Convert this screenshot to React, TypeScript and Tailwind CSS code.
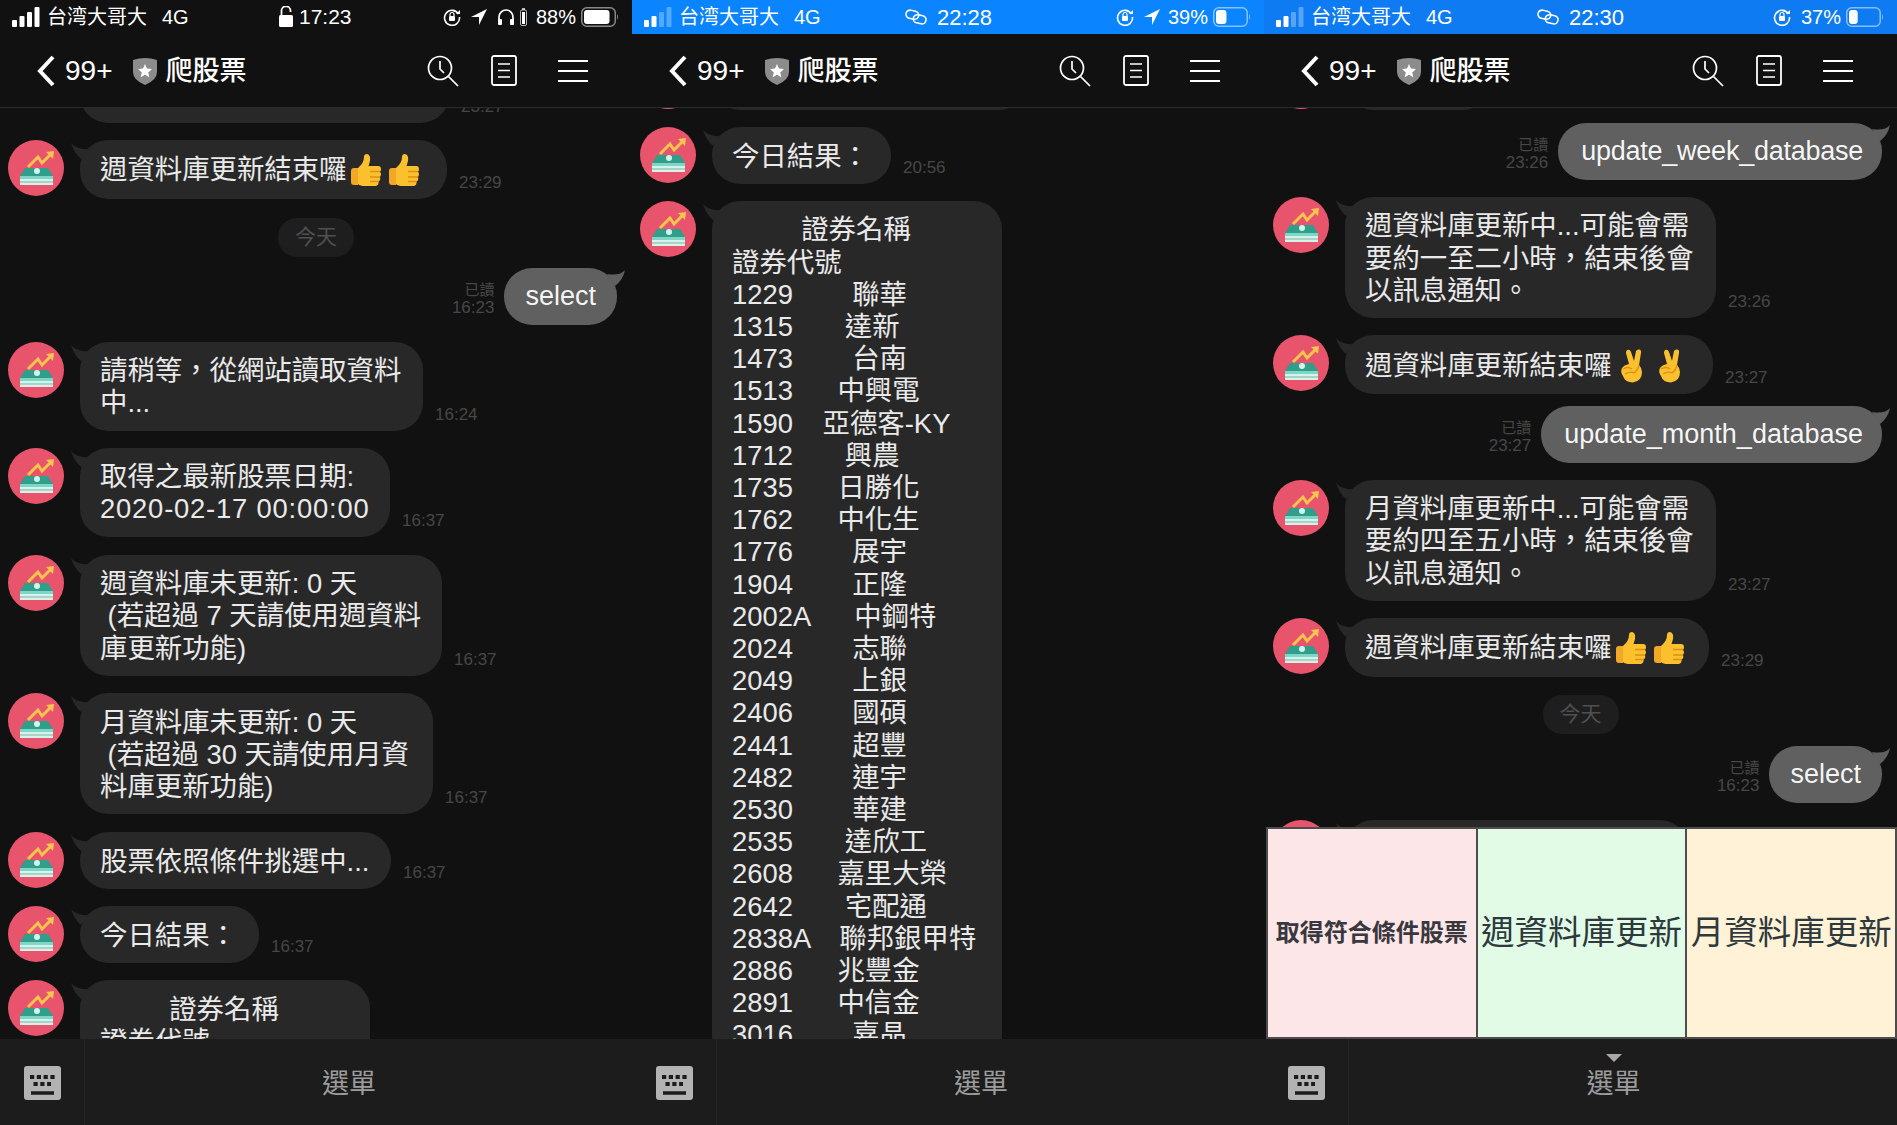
import React from 'react';

const Avatar = () => (
    <svg viewBox="0 0 56 56" className="w-14 h-14 shrink-0">
        <circle cx="28" cy="28" r="28" fill="#e8546b" />
        <path d="M20 27 L30 17 L34 23 L43 14" fill="none" stroke="#f7c44f" strokeWidth="3" />
        <path d="M38 12 L46 11 L45 19 Z" fill="#f7c44f" />
        <path d="M17 28 H40 L45 36 H12 Z" fill="#2f9e8a" />
        <circle cx="29" cy="31" r="3" fill="#d6f3ea" />
        <path d="M12 36 H45 V39 H12 Z" fill="#7fd6c4" />
        <path d="M12 39 H45 V41 H12 Z" fill="#d4f3ec" />
        <path d="M12 41 H45 V42.5 H12 Z" fill="#8fdccb" />
        <path d="M12 42.5 H45 V45 H12 Z" fill="#d4f3ec" />
    </svg>
);

const Thumb = () => (
    <svg viewBox="0 0 32 34" className="w-8 h-[34px] shrink-0">
        <path d="M1 17 Q1 14 4 14 H8 V31 H4 Q1 31 1 28 Z" fill="#f2a825" />
        <path d="M8 14 Q14 9 14 3 Q14 0 17 0 Q21 1 20 7 L18.5 12 H28 Q31 12 31 15 Q31 17 30 18 Q32 20 30 23 Q31 26 28.5 27.5 Q29 31 26 32 H15 Q10 32 8 30 Z" fill="#fbc02d" />
        <path d="M20 17.5 H30 M20 23 H30 M20 27.5 H28.5" stroke="#e08f12" strokeWidth="1.4" fill="none" />
    </svg>
);

const Victory = () => (
    <svg viewBox="0 0 26 34" className="w-[26px] h-[34px] shrink-0">
        <path d="M8 1 Q11 0 12 3 L15 12 L17 2 Q18 0 20.5 0.5 Q22.5 1 22 4 L20 16 Q23 19 23 23 Q23 32 14 33.5 Q6 33.5 4 27 Q1 23 3 19 Q5 16 10 15 L7 4 Q7 2 8 1 Z" fill="#fbc02d" />
        <path d="M4 20 Q9 17 13 20 M6 25 Q11 22 15 24 M15 24 Q19 21 20 16" stroke="#e08f12" strokeWidth="1.3" fill="none" />
    </svg>
);

function Bubble({ className, children }: { className?: string; children?: React.ReactNode }) {
    return (
        <div className={`relative bg-[#282828] rounded-[28px] px-5 pt-[13.5px] pb-[11.2px] text-white/90 whitespace-pre ${className ?? ''}`}>
            <svg viewBox="0 0 18 16" className="absolute left-[-9px] top-[3px] w-[18px] h-4">
                <path d="M0 0 Q6 7 18 6 L10 16 Q3 10 0 0 Z" fill="#282828" />
            </svg>
            {children}
        </div>
    );
}

function In({ time, className, hidden, children, bubble }: { time?: string; className?: string; hidden?: boolean; children?: React.ReactNode; bubble?: string }) {
    return (
        <div className={`flex items-end pl-2 shrink-0 ${className ?? 'mt-[17px]'}`}>
            <div className="self-start mr-4 w-14 h-14 shrink-0">{!hidden && <Avatar />}</div>
            <Bubble className={bubble}>{children}</Bubble>
            {time && <span className="ml-3 pb-[6px] text-[17px] leading-5 text-[#474747]">{time}</span>}
        </div>
    );
}

function Out({ time, className, text, children }: { time: string; className?: string; text?: string; children: React.ReactNode }) {
    return (
        <div className={`flex items-end justify-end shrink-0 ${className ?? 'mt-3 pr-[15px]'}`}>
            <div className="mr-[10px] mb-[8px] flex flex-col items-end text-[#474747] text-[16px] leading-[18px]">
                <span className="text-[15px]">已讀</span>
                <span className="text-[17px]">{time}</span>
            </div>
            <div className={`relative bg-[#606060] rounded-[28px] py-[12.35px] text-[27px] text-white/95 ${text ?? 'px-[21px]'}`}>
                <svg viewBox="0 0 18 16" className="absolute right-[-8px] top-[2px] w-[18px] h-4">
                    <path d="M18 0 Q13 6 0 4 L8 16 Q16 10 18 0 Z" fill="#606060" />
                </svg>
                {children}
            </div>
        </div>
    );
}

const DatePill = ({ className }: { className?: string }) => (
    <div className={`flex justify-center shrink-0 ${className ?? ''}`}>
        <span className="bg-[#1e1e1e] rounded-[19px] w-[76px] h-[39px] flex items-center justify-center text-[21px] text-[#4f4f4f]">今天</span>
    </div>
);

const Signal = ({ dim }: { dim?: boolean }) => (
    <svg viewBox="0 0 28 20" className="w-7 h-5 shrink-0">
        <rect x="0" y="13" width="5" height="7" rx="1" fill="white" />
        <rect x="7.5" y="9" width="5" height="11" rx="1" fill="white" />
        <rect x="15" y="5" width="5" height="15" rx="1" fill="white" fillOpacity={dim ? 0.3 : 1} />
        <rect x="22.5" y="0" width="5" height="20" rx="1" fill="white" fillOpacity={dim ? 0.3 : 1} />
    </svg>
);

const RotLock = () => (
    <svg viewBox="0 0 18 18" className="w-[18px] h-[18px] shrink-0">
        <path d="M15.5 6 A7.5 7.5 0 1 0 16.5 9" fill="none" stroke="white" strokeWidth="1.6" />
        <path d="M13 6 H17 V2 Z" fill="white" />
        <rect x="6" y="8" width="6" height="5" rx="1" fill="white" />
        <path d="M7 8 V6.5 A2 2 0 0 1 11 6.5 V8" fill="none" stroke="white" strokeWidth="1.2" />
    </svg>
);

const Arrow = () => (
    <svg viewBox="0 0 16 16" className="w-4 h-4 shrink-0">
        <path d="M16 0 L0 8 L8 8 L8 16 Z" fill="white" />
    </svg>
);

const Battery = ({ pct }: { pct: number }) => (
    <svg viewBox="0 0 38 20" className="w-[38px] h-5 shrink-0">
        <rect x="0.75" y="0.75" width="33.5" height="18.5" rx="5" fill="none" stroke="white" strokeOpacity="0.5" strokeWidth="1.5" />
        <rect x="3" y="3" width={29 * pct} height="14" rx="3" fill="white" />
        <path d="M36 7 Q38 10 36 13 Z" fill="white" fillOpacity="0.5" />
    </svg>
);

const LinkIcon = () => (
    <svg viewBox="0 0 24 18" className="w-[22px] h-[18px] shrink-0">
        <g fill="none" stroke="white" strokeWidth="1.7">
            <rect x="1" y="2" width="14" height="9" rx="4.5" transform="rotate(12 8 6.5)" />
            <rect x="9" y="7" width="14" height="9" rx="4.5" transform="rotate(12 16 11.5)" />
        </g>
    </svg>
);

function StatusBar({ time, bg, left, dim, right }: { time: React.ReactNode; bg: string; left: string; dim?: boolean; right: React.ReactNode }) {
    return (
        <div className={`h-[34px] flex items-center pl-3 pr-[13px] text-white shrink-0 ${bg}`}>
            <div className={`flex items-center ${left}`}>
                <Signal dim={dim} />
                <span className="ml-[7px] text-[20px]">台湾大哥大</span>
                <span className="ml-[15px] text-[20px]">4G</span>
            </div>
            {time}
            <div className="ml-auto flex items-center">{right}</div>
        </div>
    );
}

function Header() {
    return (
        <div className="h-[74px] flex items-center pl-9 pr-[44px] border-b border-[#2b2b2b] bg-[#111111] text-white shrink-0">
            <svg viewBox="0 0 20 32" className="w-5 h-8 shrink-0">
                <path d="M17 2 L4 16 L17 30" fill="none" stroke="white" strokeWidth="4" />
            </svg>
            <span className="ml-[9px] text-[28px] font-light">99+</span>
            <svg viewBox="0 0 24 28" className="ml-5 w-6 h-7 shrink-0">
                <path d="M0 3 Q12 -1 24 3 V15 Q24 23 12 28 Q0 23 0 15 Z" fill="#8c8c8c" />
                <path d="M12 7 L14 11.6 L19 12.1 L15.2 15.4 L16.3 20.3 L12 17.7 L7.7 20.3 L8.8 15.4 L5 12.1 L10 11.6 Z" fill="white" />
            </svg>
            <span className="ml-[9px] mt-[1px] text-[27px] font-medium">爬股票</span>
            <div className="ml-auto flex items-center">
                <svg viewBox="0 0 32 32" className="w-8 h-8 shrink-0">
                    <g fill="none" stroke="white" strokeWidth="1.7">
                        <circle cx="13" cy="13" r="11.5" />
                        <path d="M13 6 V14 L17 18 M21.5 21.5 L31 31" />
                    </g>
                </svg>
                <svg viewBox="0 0 26 31" className="ml-[32px] w-[26px] h-[31px] shrink-0">
                    <rect x="1" y="1" width="24" height="29" rx="2" fill="none" stroke="white" strokeWidth="1.8" />
                    <path d="M7 9 H19 M7 15.5 H19 M7 22 H19" stroke="white" strokeWidth="1.6" />
                </svg>
                <svg viewBox="0 0 30 24" className="ml-[41px] w-[30px] h-6 shrink-0">
                    <path d="M0 2 H30 M0 12 H30 M0 22 H30" stroke="white" strokeWidth="1.8" />
                </svg>
            </div>
        </div>
    );
}

function BottomBar({ open }: { open?: boolean }) {
    return (
        <div className="h-[86px] flex bg-[#1c1c1c] shrink-0">
            <div className="w-[85px] border-r border-[#262626] flex items-center justify-center shrink-0">
                <svg viewBox="0 0 37 34" className="w-[37px] h-[34px] mt-[1px]">
                    <rect width="37" height="34" rx="3" fill="#b3b3b3" />
                    <path d="M6 11 H31" stroke="#1c1c1c" strokeWidth="4" strokeDasharray="4.2 2.6" />
                    <path d="M9.5 18 H27" stroke="#1c1c1c" strokeWidth="4" strokeDasharray="4.2 2.6" />
                    <path d="M7 27 H30" stroke="#1c1c1c" strokeWidth="3.5" />
                </svg>
            </div>
            <div className="flex-1 flex items-center justify-center text-[27px] text-[#9c9c9c] pr-[19px] pt-1">
                <span className="relative">
                    {open && <span className="absolute -top-[10px] left-1/2 -ml-2 w-0 h-0 border-l-8 border-r-8 border-t-8 border-l-transparent border-r-transparent border-t-[#a8a8a8]" />}
                    選單
                </span>
            </div>
        </div>
    );
}

const stocks = [
    '1229        聯華', '1315       達新', '1473        台南', '1513      中興電', '1590    亞德客-KY',
    '1712       興農', '1735      日勝化', '1762      中化生', '1776        展宇', '1904        正隆',
    '2002A      中鋼特', '2024        志聯', '2049        上銀', '2406        國碩', '2441        超豐',
    '2482        連宇', '2530        華建', '2535       達欣工', '2608      嘉里大榮', '2642       宅配通',
    '2838A    聯邦銀甲特', '2886      兆豐金', '2891      中信金', '3016        嘉晶',
];

function Chat({ children }: { children: React.ReactNode }) {
    return <div className="flex-1 min-h-0 overflow-hidden flex flex-col text-[27.4px] leading-[32.2px] bg-[#111111]">{children}</div>;
}

export default function App() {
    return (
        <div className="w-[1897px] h-[1125px] flex overflow-hidden bg-[#111111] font-['Liberation_Sans','Noto_Sans_CJK_TC',sans-serif]">
            {/* left phone */}
            <div className="w-[632px] h-[1125px] flex flex-col">
                <StatusBar
                    bg="bg-[#111111]"
                    left="w-[267px]"
                    time={
                        <div className="flex items-center">
                            <svg viewBox="0 0 14 22" className="w-[14px] h-[22px]">
                                <rect x="0" y="9" width="14" height="12" rx="1.5" fill="white" />
                                <path d="M2.5 9 V5 A4.5 4.5 0 0 1 11.5 4.5 V6" fill="none" stroke="white" strokeWidth="1.8" />
                            </svg>
                            <span className="ml-[6px] text-[21px]">17:23</span>
                        </div>
                    }
                    right={
                        <>
                            <RotLock />
                            <span className="ml-[10px]"><Arrow /></span>
                            <svg viewBox="0 0 18 18" className="ml-[10px] w-[18px] h-[18px]">
                                <path d="M2 12 V9 A7 7 0 0 1 16 9 V12" fill="none" stroke="white" strokeWidth="1.7" />
                                <rect x="1" y="11" width="4" height="6" rx="1" fill="white" />
                                <rect x="13" y="11" width="4" height="6" rx="1" fill="white" />
                            </svg>
                            <svg viewBox="0 0 7 18" className="ml-[5px] w-[7px] h-[18px]">
                                <rect x="0.5" y="2" width="6" height="15.5" rx="1.5" fill="none" stroke="white" strokeOpacity="0.7" />
                                <rect x="2" y="4" width="3" height="12" fill="white" />
                                <rect x="2" y="0" width="3" height="2" fill="white" fillOpacity="0.7" />
                            </svg>
                            <span className="ml-[9px] mr-[5px] text-[20px]">88%</span>
                            <Battery pct={0.88} />
                        </>
                    }
                />
                <Header />
                <Chat>
                    <In hidden time="23:27" className="-mt-[42px]" bubble="w-[369px] h-[57px]" />
                    <In time="23:29" bubble="w-[367px] flex items-center">
                        週資料庫更新結束囉
                        <span className="ml-[3px] mr-[6px]"><Thumb /></span>
                        <Thumb />
                    </In>
                    <DatePill className="mt-[19px]" />
                    <Out time="16:23" className="mt-[11px] pr-[15px]">select</Out>
                    <In time="16:24" bubble="w-[343px]">{'請稍等\uFF0C從網站讀取資料\n中...'}</In>
                    <In time="16:37" bubble="w-[310px]">
                        取得之最新股票日期:
                        {'\n'}
                        <span className="tracking-[0.8px]">2020-02-17 00:00:00</span>
                    </In>
                    <In time="16:37" className="mt-[18px]" bubble="w-[362px]">{'週資料庫未更新: 0 天\n (若超過 7 天請使用週資料\n庫更新功能)'}</In>
                    <In time="16:37" bubble="w-[353px]">{'月資料庫未更新: 0 天\n (若超過 30 天請使用月資\n料庫更新功能)'}</In>
                    <In time="16:37" className="mt-[18px]" bubble="w-[311px]">股票依照條件挑選中...</In>
                    <In time="16:37" bubble="w-[179px]">{'今日結果\uFF1A'}</In>
                    <In bubble="w-[290px]">
                        <div className="text-center pr-[2px]">證券名稱</div>
                        證券代號
                    </In>
                </Chat>
                <BottomBar />
            </div>

            {/* middle phone */}
            <div className="w-[632px] h-[1125px] flex flex-col">
                <StatusBar
                    bg="bg-[#0a84ff]"
                    left="w-[261px]"
                    dim
                    time={
                        <div className="flex items-center">
                            <LinkIcon />
                            <span className="ml-[10px] text-[22px] font-medium">22:28</span>
                        </div>
                    }
                    right={
                        <>
                            <RotLock />
                            <span className="ml-[10px]"><Arrow /></span>
                            <span className="ml-2 mr-[5px] text-[20px]">39%</span>
                            <Battery pct={0.36} />
                        </>
                    }
                />
                <Header />
                <Chat>
                    <In className="-mt-[55px]" bubble="w-[315px] h-[57px]" />
                    <In bubble="w-[179px]" time="20:56">{'今日結果\uFF1A'}</In>
                    <In bubble="w-[290px]">
                        <div className="text-center pr-[2px]">證券名稱</div>
                        {'證券代號\n'}
                        <span className="[word-spacing:-0.2px]">{stocks.join('\n')}</span>
                    </In>
                </Chat>
                <BottomBar />
            </div>

            {/* right phone */}
            <div className="w-[633px] h-[1125px] flex flex-col">
                <StatusBar
                    bg="bg-[#0f7bf2]"
                    left="w-[261px]"
                    dim
                    time={
                        <div className="flex items-center">
                            <LinkIcon />
                            <span className="ml-[10px] text-[22px] font-medium">22:30</span>
                        </div>
                    }
                    right={
                        <>
                            <RotLock />
                            <span className="ml-[10px] mr-[5px] text-[20px]">37%</span>
                            <Battery pct={0.3} />
                        </>
                    }
                />
                <Header />
                <Chat>
                    <In className="-mt-[55px] pl-[9px]" bubble="w-[146px] h-[57px]" />
                    <Out time="23:26" className="mt-[13px] pr-[15px]" text="tracking-[-0.25px] pl-[23px] pr-[19px]">update_week_database</Out>
                    <In className="mt-[17px] pl-[9px]" time="23:26" bubble="w-[371px]">{'週資料庫更新中...可能會需\n要約一至二小時\uFF0C結束後會\n以訊息通知。'}</In>
                    <In className="mt-[17px] pl-[9px]" time="23:27" bubble="w-[368px] flex items-center">
                        週資料庫更新結束囉
                        <span className="ml-[7px] mr-[12px]"><Victory /></span>
                        <Victory />
                    </In>
                    <Out time="23:27" className="mt-3 pr-[15px]" text="pl-[23px] pr-[19px]">update_month_database</Out>
                    <In className="mt-[17px] pl-[9px]" time="23:27" bubble="w-[371px]">{'月資料庫更新中...可能會需\n要約四至五小時\uFF0C結束後會\n以訊息通知。'}</In>
                    <In className="mt-[17px] pl-[9px]" time="23:29" bubble="w-[364px] flex items-center">
                        週資料庫更新結束囉
                        <span className="ml-[3px] mr-[6px]"><Thumb /></span>
                        <Thumb />
                    </In>
                    <DatePill className="mt-[18px]" />
                    <Out time="16:23" className="mt-3 pr-[15px]">select</Out>
                    <In className="mt-[17px] pl-[9px]" bubble="w-[343px] h-[88px]" />
                </Chat>
                <div className="h-[212px] ml-[2px] grid grid-cols-3 gap-[2px] border-2 border-[#4d4d4d] bg-[#4d4d4d] shrink-0 text-[#2e393d]">
                    <div className="bg-[#fde6e8] flex items-center justify-center text-[24px] font-bold text-[#39383f] whitespace-nowrap">取得符合條件股票</div>
                    <div className="bg-[#e2fbe6] flex items-center justify-center text-[33.5px] whitespace-nowrap">週資料庫更新</div>
                    <div className="bg-[#fff2d6] flex items-center justify-center text-[33.5px] whitespace-nowrap">月資料庫更新</div>
                </div>
                <BottomBar open />
            </div>
        </div>
    );
}
